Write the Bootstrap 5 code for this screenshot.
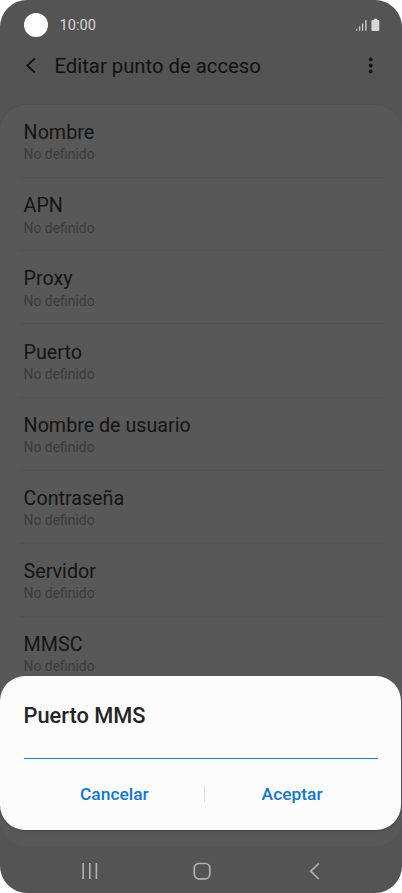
<!DOCTYPE html>
<html lang="es">
<head>
<meta charset="utf-8">
<meta name="viewport" content="width=device-width, initial-scale=1">
<title>Editar punto de acceso</title>
<link href="https://cdn.jsdelivr.net/npm/bootstrap@5.3.0/dist/css/bootstrap.min.css" rel="stylesheet">
<style>
body { font-family: Roboto, "Liberation Sans", sans-serif; background: #fff; }
.phone { width: 402px; height: 893px; background: #545454; border-radius: 27px; }
.status { height: 50px; padding: 0 21px 0 24px; color: #d6d6d6; font-size: 14.6px; }
.camera { width: 24px; height: 24px; }
.clock { margin-left: 11.5px; padding-top: 1px; }
.appbar { height: 54px; padding: 0 26px 22px 24px; color: #121212; }
.appbar h1 { font-size: 20.3px; line-height: 24px; padding-left: .5px; }
.panel { height: 742px; padding: 0 19px; background: #585858; border-radius: 26px; border-top: 1px solid #505050; }
.entry { height: 73.14px; padding: 16.2px 4.6px 0; border: 0; border-bottom: 1px solid #535353; background: transparent; color: #141414; }
.entry-name { font-size: 19.7px; line-height: 24px; }
.entry-value { font-size: 13.9px; line-height: 18px; margin-top: .3px; color: #3b3b3b; }
.navkeys { height: 47px; padding: 3px 78px 0 78px; }
.sheet { top: 676px; width: 401px; height: 154px; padding: 27px 23px 0 23.5px; background: #fcfcfc; border-radius: 25px; box-shadow: 0 1px 2px #3338; }
.sheet h2 { font-size: 21.8px; line-height: 26px; color: #252525; }
.sheet .form-control { height: 30px; border-bottom: 1px solid #0a84f5; background: transparent; }
.sheet .btn { flex: 1 1 0; font-size: 17.4px; line-height: 24px; color: #0c76dc; padding: 7px 0; }
.actions { padding-left: 5px; }
.sheet .btn:first-child { padding-right: 5px; }
.sheet .btn:last-child { padding-left: 1px; }
.split { width: 1px; height: 16px; background: #dedede; margin-left: -1px; }
</style>
</head>
<body>
<main class="phone position-relative overflow-hidden d-flex flex-column">
  <div class="status d-flex align-items-center">
    <span class="camera rounded-circle bg-white"></span>
    <span class="clock">10:00</span>
    <svg class="ms-auto" width="26" height="14" viewBox="0 0 26 14" fill="#d6d6d6" aria-hidden="true">
      <path d="M1.3 10.8h1v2h-1zM4.1 8.3h1.2v4.5H4.1zM7 5.5h1.2v7.3H7zM10.2 2h1.3v10.8h-1.3z"/>
      <path d="M18.9 .8h3.4v1.1h.8q1.200 0 1.200 1.200v8.600q0 1.200-1.200 1.200h-5.500q-1.200 0-1.200-1.200V3.100q0-1.200 1.200-1.200h1.300z"/>
    </svg>
  </div>
  <header class="appbar d-flex align-items-center">
    <svg width="14" height="18" viewBox="0 0 14 18" fill="none" stroke="#121212" stroke-width="1.7" aria-hidden="true"><path d="M10.8 1.5 3.2 8.5l7.600 7"/></svg>
    <h1 class="fw-normal mb-0 ms-3">Editar punto de acceso</h1>
    <svg class="ms-auto" width="10" height="18" viewBox="0 0 10 18" fill="#121212" aria-hidden="true"><circle cx="4.7" cy="2.4" r="1.9"/><circle cx="4.7" cy="8.5" r="1.9"/><circle cx="4.7" cy="14.5" r="1.9"/></svg>
  </header>
  <section class="panel overflow-hidden">
    <div class="list-group list-group-flush">
      <div class="list-group-item entry"><div class="entry-name">Nombre</div><div class="entry-value">No definido</div></div>
      <div class="list-group-item entry"><div class="entry-name">APN</div><div class="entry-value">No definido</div></div>
      <div class="list-group-item entry"><div class="entry-name">Proxy</div><div class="entry-value">No definido</div></div>
      <div class="list-group-item entry"><div class="entry-name">Puerto</div><div class="entry-value">No definido</div></div>
      <div class="list-group-item entry"><div class="entry-name">Nombre de usuario</div><div class="entry-value">No definido</div></div>
      <div class="list-group-item entry"><div class="entry-name">Contraseña</div><div class="entry-value">No definido</div></div>
      <div class="list-group-item entry"><div class="entry-name">Servidor</div><div class="entry-value">No definido</div></div>
      <div class="list-group-item entry"><div class="entry-name">MMSC</div><div class="entry-value">No definido</div></div>
    </div>
  </section>
  <nav class="navkeys d-flex align-items-center justify-content-between">
    <svg width="24" height="20" viewBox="0 0 24 20" stroke="#b2b2b2" stroke-width="1.6" aria-hidden="true"><path d="M5.2 2v16M11.8 2v16M18.4 2v16"/></svg>
    <svg width="20" height="20" viewBox="0 0 20 20" fill="none" stroke="#b2b2b2" stroke-width="1.7" aria-hidden="true"><rect x="1.3" y="2.5" width="15.5" height="15.3" rx="4.5"/></svg>
    <svg width="20" height="20" viewBox="0 0 20 20" fill="none" stroke="#b2b2b2" stroke-width="1.7" aria-hidden="true"><path d="M14.8 2.5 6.7 10.2l8.100 7.800"/></svg>
  </nav>
  <div class="sheet position-absolute start-0" role="dialog" aria-labelledby="sheetTitle">
    <h2 id="sheetTitle" class="fw-medium mb-0">Puerto MMS</h2>
    <input class="form-control rounded-0 border-top-0 border-start-0 border-end-0 p-0" type="text" aria-label="Puerto MMS">
    <div class="actions d-flex align-items-center mt-3">
      <button type="button" class="btn border-0 fw-medium">Cancelar</button>
      <span class="split"></span>
      <button type="button" class="btn border-0 fw-medium">Aceptar</button>
    </div>
  </div>
</main>
<script src="https://cdn.jsdelivr.net/npm/bootstrap@5.3.0/dist/js/bootstrap.bundle.min.js"></script>
</body>
</html>
